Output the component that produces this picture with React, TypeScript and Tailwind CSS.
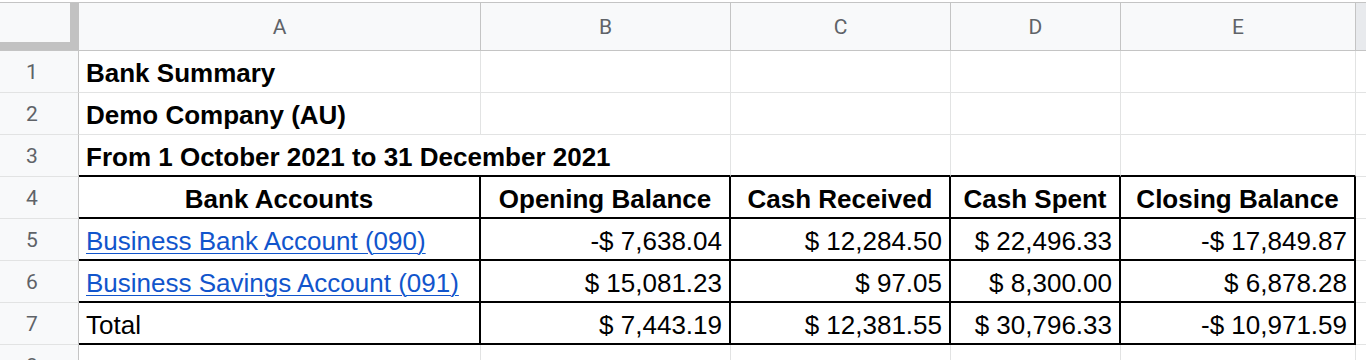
import React from 'react';

const font = { fontFamily: '"Liberation Sans", Arial, sans-serif' };

const cols = ['A', 'B', 'C', 'D', 'E'];

type Cell = { text?: string; bold?: boolean; align?: 'left' | 'right' | 'center'; link?: boolean; overflow?: boolean };

const rows: Cell[][] = [
    [{ text: 'Bank Summary', bold: true }, {}, {}, {}, {}],
    [{ text: 'Demo Company (AU)', bold: true }, {}, {}, {}, {}],
    [{ text: 'From 1 October 2021 to 31 December 2021', bold: true, overflow: true }, {}, {}, {}, {}],
    [
        { text: 'Bank Accounts', bold: true, align: 'center' },
        { text: 'Opening Balance', bold: true, align: 'center' },
        { text: 'Cash Received', bold: true, align: 'center' },
        { text: 'Cash Spent', bold: true, align: 'center' },
        { text: 'Closing Balance', bold: true, align: 'center' },
    ],
    [
        { text: 'Business Bank Account (090)', link: true },
        { text: '-$ 7,638.04', align: 'right' },
        { text: '$ 12,284.50', align: 'right' },
        { text: '$ 22,496.33', align: 'right' },
        { text: '-$ 17,849.87', align: 'right' },
    ],
    [
        { text: 'Business Savings Account (091)', link: true },
        { text: '$ 15,081.23', align: 'right' },
        { text: '$ 97.05', align: 'right' },
        { text: '$ 8,300.00', align: 'right' },
        { text: '$ 6,878.28', align: 'right' },
    ],
    [
        { text: 'Total' },
        { text: '$ 7,443.19', align: 'right' },
        { text: '$ 12,381.55', align: 'right' },
        { text: '$ 30,796.33', align: 'right' },
        { text: '-$ 10,971.59', align: 'right' },
    ],
    [{}, {}, {}, {}, {}],
];

const cellClass = (r: number, c: number, cell: Cell) => {
    // rows 4-7 (index 3-6) form the bordered table; row 3 carries its top edge
    const inTable = r >= 3 && r <= 6;
    const bottom = r >= 2 && r <= 6 ? 'border-b-2 border-b-black' : 'border-b border-b-[#e2e3e3]';
    let right = 'border-r border-r-[#e2e3e3]';
    if (inTable) right = 'border-r-2 border-r-black';
    if (cell.overflow) right = 'border-r-0';
    const justify = cell.align === 'right' ? 'justify-end' : cell.align === 'center' ? 'justify-center' : 'justify-start';
    return `h-[42px] flex items-center ${justify} px-[7px] pt-[3px] ${bottom} ${right} ${cell.overflow ? 'overflow-visible relative z-10' : 'overflow-hidden'}`;
};

export default function App() {
    return (
        <div className="w-[1366px] h-[360px] overflow-hidden bg-white" style={font}>
            <div className="h-[3px] bg-white border-b border-[#c4c4c4]" />
            <div className="grid grid-cols-[79px_402px_250px_220px_170px_235px_1fr]">
                {/* corner with frozen pane bars */}
                <div className="h-[48px] bg-[#c2c2c2] border-b border-[#c4c4c4]">
                    <div className="w-[70px] h-[39px] bg-[#f8f9fa]" />
                </div>
                {cols.map((c) => (
                    <div
                        key={c}
                        className="h-[48px] flex items-center justify-center pt-[2px] bg-[#f8f9fa] border-r border-b border-[#c4c4c4] text-[21px] text-[#5f6368]"
                        style={{ fontFamily: 'Roboto, Arial, sans-serif' }}
                    >
                        {c}
                    </div>
                ))}
                <div className="h-[48px] bg-[#e8eaed] border-b border-[#c4c4c4]" />

                {rows.map((row, r) => (
                    <React.Fragment key={r}>
                        <div
                            className="h-[42px] flex items-center justify-center pr-[14px] pt-[2px] bg-[#f8f9fa] border-r border-r-[#c4c4c4] border-b border-b-[#e2e3e3] text-[21px] text-[#5f6368]"
                            style={{ fontFamily: 'Roboto, Arial, sans-serif' }}
                        >
                            {r + 1}
                        </div>
                        {row.map((cell, c) => (
                            <div key={c} className={cellClass(r, c, cell)}>
                                {cell.text && (
                                    <span
                                        className={`text-[26px] leading-[30px] whitespace-nowrap ${cell.bold ? 'font-bold' : ''} ${
                                            cell.link ? 'text-[#1155cc] underline underline-offset-[3px] decoration-1' : 'text-black'
                                        }`}
                                    >
                                        {cell.text}
                                    </span>
                                )}
                            </div>
                        ))}
                        <div className="h-[42px] border-b border-[#e2e3e3]" />
                    </React.Fragment>
                ))}
            </div>
        </div>
    );
}
